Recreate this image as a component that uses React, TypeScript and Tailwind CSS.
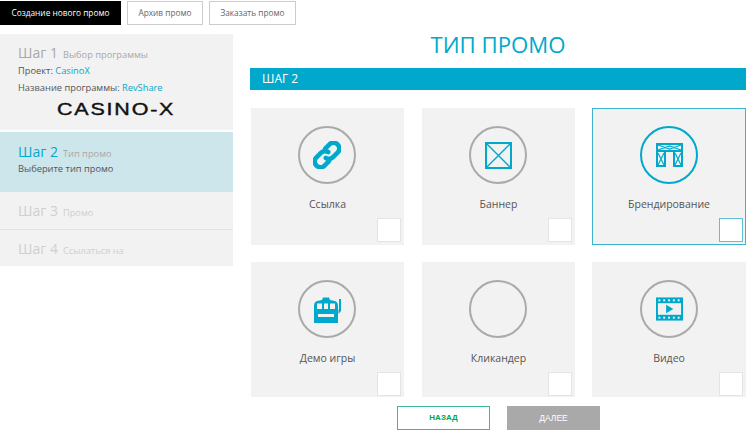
import React from "react";

const C = "#00a9cb";

function LinkIcon() {
  return (
    <svg width="28" height="28" viewBox="2 2 24 24" fill="none" stroke={C} strokeWidth="4" strokeLinecap="round">
      <path d="M12.5 8.5 L16.5 4.5 A5 5 0 0 1 23.5 11.5 L19 16 A5 5 0 0 1 13 16.5" />
      <path d="M15.5 19.5 L11.5 23.5 A5 5 0 0 1 4.5 16.5 L9 12 A5 5 0 0 1 15 11.5" />
    </svg>
  );
}
function BannerIcon() {
  return (
    <svg width="27" height="27" viewBox="0 0 28 28" fill="none" stroke={C}>
      <rect x="1" y="1" width="26" height="26" strokeWidth="2.2" />
      <path d="M1 1 L27 27 M27 1 L1 27" strokeWidth="1.4" />
    </svg>
  );
}
function BrandIcon() {
  return (
    <svg width="27" height="24" viewBox="0 0 27 24" fill="none" stroke={C}>
      <rect x="1" y="1" width="25" height="7" strokeWidth="2" />
      <path d="M2 2 L13.500 6 L25 2 M2 7 L13.500 3 L25 7" strokeWidth="1.2" />
      <rect x="1" y="8" width="8" height="15" strokeWidth="2" />
      <rect x="18" y="8" width="8" height="15" strokeWidth="2" />
      <path d="M2 10 L8 22 M8 10 L2 22 M19 10 L25 22 M25 10 L19 22" strokeWidth="1.2" />
    </svg>
  );
}
function SlotIcon() {
  return (
    <svg width="27" height="27" viewBox="0 0 27 27">
      <path fill={C} fillRule="evenodd" d="M0 10 Q0 6 3 5 L8 4 L9 1.500 L15 1.500 L16 4 L21 5 Q24 6 24 10 L24 27 L0 27 Z M3 7.500 L3 13 L8 13 L8 7.500 Z M10 7.500 L10 13 L14 13 L14 7.500 Z M16 7.500 L16 13 L21 13 L21 7.500 Z M4 18 L4 21 L20 21 L20 18 Z" />
      <path fill={C} d="M25 3 L27 3 L27 15 L24.500 18 L24.500 14 L25 13 Z" />
    </svg>
  );
}
function VideoIcon() {
  const xs = [3.5, 8.5, 13.5, 18.5, 23.5];
  return (
    <svg width="27" height="24" viewBox="0 0 28 24">
      <rect x="0" y="0" width="28" height="24" fill={C} />
      <rect x="2" y="6" width="24" height="12" fill="#f1f1f1" />
      {xs.map((x) => (
        <React.Fragment key={x}>
          <rect x={x - 1} y="2" width="2" height="2" fill="#f1f1f1" />
          <rect x={x - 1} y="20" width="2" height="2" fill="#f1f1f1" />
        </React.Fragment>
      ))}
      <path d="M10.500 7.500 L18 12 L10.500 16.500 Z" fill={C} />
    </svg>
  );
}

function Card({ label, icon, active, tall, wide, tight }: { label: string; icon?: React.ReactNode; active?: boolean; tall?: boolean; wide?: boolean; tight?: boolean }) {
  return (
    <div
      className={`relative flex flex-col items-center bg-[#f2f2f2] ${wide ? "w-[154px]" : "w-[153px]"} ${tall ? "h-[137px]" : "h-[135px]"} ${active ? "border border-[#3db4cc] pt-[17px]" : "pt-[18px]"}`}
    >
      <div className={`flex h-[58px] w-[58px] items-center justify-center rounded-full border-2 ${wide ? "" : "mr-[1px]"} ${active ? "border-[#00a9cb]" : "border-[#aaaaaa]"}`}>
        {icon}
      </div>
      <div className="mt-[8px] text-[10.500px] leading-[24px] text-[#555]">{label}</div>
      <div
        className={`absolute h-[24px] w-[24px] bg-white ${active ? "bottom-[2px] right-[2px] border border-[#5fbfd3]" : tight ? "bottom-[1px] right-[3px] border border-[#e4e4e4]" : "bottom-[3px] right-[3px] border border-[#e4e4e4]"}`}
      />
    </div>
  );
}

function Step({ n, sub, dim, active }: { n: string; sub: string; dim?: boolean; active?: boolean }) {
  return (
    <div className="flex items-baseline gap-[5px]">
      <span className={`text-[14px] leading-[24px] ${active ? "text-[#00a9cb]" : dim ? "text-[#cfcfcf]" : "text-[#a8a8a8]"}`}>{n}</span>
      <span className={`text-[9.300px] ${dim ? "text-[#cfcfcf]" : "text-[#a8a8a8]"}`}>{sub}</span>
    </div>
  );
}

export default function App() {
  return (
    <div className="h-[431px] w-[750px] overflow-hidden bg-white font-['Open_Sans',sans-serif]">
      <div className="flex gap-[6px] pt-[1px] text-[8.300px]">
        <div className="flex h-[24px] w-[121px] items-center justify-center bg-black text-white">Создание нового промо</div>
        <div className="flex h-[24px] w-[76px] items-center justify-center border border-[#ccc] text-[#666]">Архив промо</div>
        <div className="flex h-[24px] w-[87px] items-center justify-center border border-[#ccc] text-[#666]">Заказать промо</div>
      </div>
      <div className="flex pt-[9px]">
        <div className="w-[233px]">
          <div className="h-[96px] bg-[#f2f2f2] pl-[18px] pt-[7px]">
            <Step n="Шаг 1" sub="Выбор программы" />
            <div className="mt-[-3px] text-[9.300px] leading-[17px] text-[#555]">Проект: <span className="text-[#00a9cb]">CasinoX</span></div>
            <div className="text-[9.300px] leading-[17px] text-[#555]">Название программы: <span className="text-[#00a9cb]">RevShare</span></div>
            <div className="ml-[39px] mt-[6px] origin-left scale-x-[1.3] whitespace-nowrap font-['Liberation_Sans',sans-serif] text-[16.500px] font-normal leading-[15px] tracking-[1.400px] text-[#111] [-webkit-text-stroke:0.4px_#111]">CASINO-X</div>
          </div>
          <div className="mt-[2px] h-[60px] bg-[#cde6ec] pl-[18px] pt-[8px]">
            <Step n="Шаг 2" sub="Тип промо" active />
            <div className="mt-[-2px] text-[9.300px] leading-[14px] text-[#555]">Выберите тип промо</div>
          </div>
          <div className="h-[38px] border-b border-[#e2e2e2] bg-[#f2f2f2] pl-[18px] pt-[7px]">
            <Step n="Шаг 3" sub="Промо" dim />
          </div>
          <div className="h-[36px] bg-[#f2f2f2] pl-[18px] pt-[7px]">
            <Step n="Шаг 4" sub="Ссылаться на" dim />
          </div>
        </div>
        <div className="ml-[17px] w-[496px]">
          <div className="text-center text-[22.200px] leading-[22px] text-[#00a9cb]">ТИП ПРОМО</div>
          <div className="mt-[12px] flex h-[22px] items-center bg-[#00a9cb] pl-[12px] text-[12px] text-white">ШАГ 2</div>
          <div className="mt-[18px] flex flex-col gap-[17px] pl-[1px]">
            <div className="flex">
              <Card tall label="Ссылка" icon={<LinkIcon />} />
              <div className="w-[18px]" />
              <Card tall label="Баннер" icon={<BannerIcon />} />
              <div className="w-[17px]" />
              <Card tall wide label="Брендирование" icon={<BrandIcon />} active />
            </div>
            <div className="flex">
              <Card tight label="Демо игры" icon={<SlotIcon />} />
              <div className="w-[18px]" />
              <Card tight label="Кликандер" />
              <div className="w-[17px]" />
              <Card tight wide label="Видео" icon={<VideoIcon />} />
            </div>
          </div>
          <div className="mt-[9px] flex gap-[17px] pl-[147px] font-['Liberation_Sans',sans-serif] font-bold">
            <div className="flex h-[24px] w-[93px] items-center justify-center border border-[#3fb89a] text-[8px] text-[#00a651]">НАЗАД</div>
            <div className="flex h-[24px] w-[93px] items-center justify-center bg-[#a9a9a9] text-[8.500px] font-normal text-white">ДАЛЕЕ</div>
          </div>
        </div>
      </div>
    </div>
  );
}
